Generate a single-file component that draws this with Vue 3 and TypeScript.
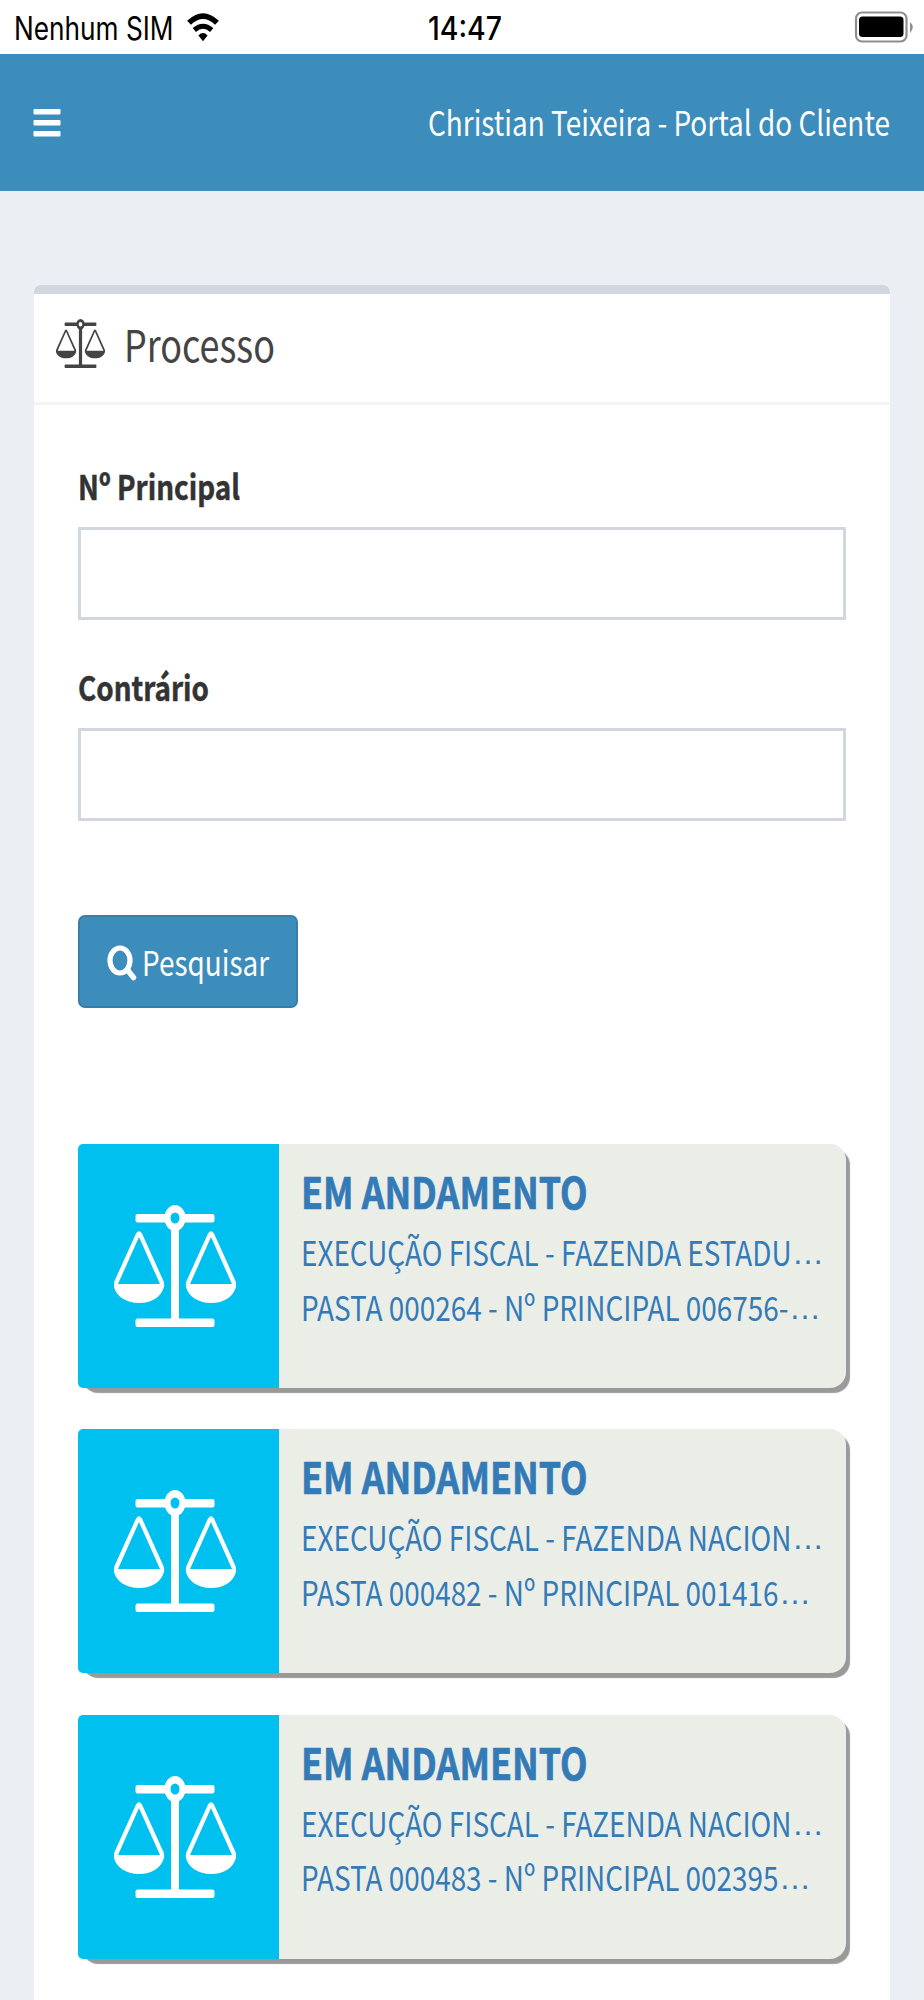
<script setup lang="ts">
import type { Directive } from 'vue'

interface Line { text: string; width: number; dots: number }
interface Process { status: string; lines: Line[] }

const processes: Process[] = [
  { status: 'EM ANDAMENTO', lines: [
    { text: 'EXECUÇÃO FISCAL - FAZENDA ESTADU', width: 490.5, dots: 32 },
    { text: 'PASTA 000264 - Nº PRINCIPAL 006756-', width: 487.5, dots: 32 },
  ] },
  { status: 'EM ANDAMENTO', lines: [
    { text: 'EXECUÇÃO FISCAL - FAZENDA NACION', width: 490.5, dots: 32 },
    { text: 'PASTA 000482 - Nº PRINCIPAL 001416', width: 477.5, dots: 32 },
  ] },
  { status: 'EM ANDAMENTO', lines: [
    { text: 'EXECUÇÃO FISCAL - FAZENDA NACION', width: 490.5, dots: 32 },
    { text: 'PASTA 000483 - Nº PRINCIPAL 002395', width: 477.5, dots: 32 },
  ] },
]

// Condenses a line of text horizontally to the given width.
const vFit: Directive<HTMLElement, number> = {
  mounted(el, { value }) {
    const natural = el.getBoundingClientRect().width
    el.style.transform = `scaleX(${value / natural})`
    el.style.marginRight = `${value - natural}px`
  },
}
</script>

<template>
  <div class="screen">
    <div class="status">
      <div class="carrier">
        <span v-fit="159.5" class="fit">Nenhum SIM</span>
        <svg class="wifi" width="34" height="30" viewBox="0 0 34 30">
          <path d="M3 9.800Q17 -3.500 31 9.800" fill="none" stroke="#000" stroke-width="5.500" />
          <path d="M8.300 17Q17 9.500 25.700 17" fill="none" stroke="#000" stroke-width="5" />
          <path d="M12.400 22.500Q17 17.600 21.600 22.500L17 28.300Z" />
        </svg>
      </div>
      <div class="clock"><span v-fit="74" class="fit">14:47</span></div>
      <svg class="battery" width="60" height="34" viewBox="0 0 60 34">
        <rect x="2" y="2.500" width="50.500" height="29" rx="6" fill="none" stroke="#8e8e8e" stroke-width="2.200" />
        <rect x="5" y="6.500" width="44.500" height="20.500" rx="3.500" />
        <path d="M56 12Q61.500 17 56 23Z" fill="#8e8e8e" />
      </svg>
    </div>

    <header class="navbar">
      <svg width="28" height="28" viewBox="0 0 28 28" fill="#fff">
        <rect x="0.500" y="0" width="27" height="5.500" rx="1" />
        <rect x="0.500" y="11" width="27" height="5.500" rx="1" />
        <rect x="0.500" y="22" width="27" height="5.500" rx="1" />
      </svg>
      <span v-fit="462" class="fit">Christian Teixeira - Portal do Cliente</span>
    </header>

    <main class="box">
      <div class="box-header">
        <svg class="scale-small" viewBox="0 0 122 122">
          <use href="#scale" />
        </svg>
        <span v-fit="151" class="fit">Processo</span>
      </div>

      <div class="box-body">
        <label class="field">
          <span v-fit="162" class="fit">Nº Principal</span>
          <input type="text">
        </label>
        <label class="field">
          <span v-fit="131" class="fit">Contrário</span>
          <input type="text">
        </label>

        <button class="search" type="button">
          <svg width="30" height="36" viewBox="0 0 30 36" fill="none" stroke="#fff">
            <ellipse cx="13" cy="15.500" rx="10" ry="12.500" stroke-width="5.200" />
            <path d="M20.500 25L26.500 32.500" stroke-width="5.500" stroke-linecap="round" />
          </svg>
          <span v-fit="127" class="fit">Pesquisar</span>
        </button>

        <a v-for="(item, i) in processes" :key="i" class="card">
          <span class="card-icon">
            <svg width="122" height="122" viewBox="0 0 122 122">
              <g :id="i === 0 ? 'scale' : undefined">
                <rect x="21.500" y="9" width="32" height="8.500" rx="2" fill="currentColor" />
                <rect x="68.500" y="9" width="32" height="8.500" rx="2" fill="currentColor" />
                <rect x="57" y="22" width="8" height="96" fill="currentColor" />
                <rect x="21.500" y="113.500" width="79" height="8.500" rx="2" fill="currentColor" />
                <path fill-rule="evenodd" fill="currentColor" d="M61 0a10.500 13 0 0 1 0 26a10.500 13 0 0 1 0-26ZM61 7.500a4.500 5.500 0 0 0 0 11a4.500 5.500 0 0 0 0-11Z" />
                <path v-for="x in [0, 72]" :key="x" :transform="`translate(${x} 0)`" fill-rule="evenodd" fill="currentColor" d="M22 28.500Q25 24 28 28.500L49.500 76Q50.500 79 50 82C47 92 38 98 25 98S2 91 0 82Q-.5 79 .5 76ZM25 32L4 79H46Z" />
              </g>
            </svg>
          </span>
          <span class="card-text">
            <span class="row title"><span v-fit="286.5" class="fit">{{ item.status }}</span></span>
            <span v-for="line in item.lines" :key="line.text" class="row">
              <span v-fit="line.width" class="fit">{{ line.text }}</span><span v-fit="line.dots" class="fit dots">…</span>
            </span>
          </span>
        </a>
      </div>
    </main>
  </div>
</template>

<style>
body { background: #ebeff4; }
</style>

<style scoped>
.screen {
  width: 924px;
  height: 2000px;
  overflow: hidden;
  background: #ebeff4;
  font-family: "Noto Sans CJK SC", "Open Sans", sans-serif;
  font-size: 34px;
}
.fit { display: inline-block; flex: none; white-space: pre; transform-origin: 0 50%; }
.status {
  display: grid;
  grid-template-columns: 1fr 69px 1fr;
  height: 54px;
  background: #fff;
  color: #000;
  font-family: Inter, sans-serif;
  font-size: 32px;
  line-height: 58px;
}
.carrier { display: flex; padding-left: 14px; }
.wifi { margin: 13px 0 0 12.5px; }
.clock { font-weight: 500; }
.battery { justify-self: end; margin: 10px 10px 0 0; }
.navbar {
  display: flex;
  align-items: center;
  justify-content: space-between;
  box-sizing: border-box;
  height: 136.5px;
  padding: 0 34px 0 33px;
  background: #3c8dbc;
  color: #fff;
}
.navbar svg { margin-top: 1px; }
.navbar .fit { margin-top: -2px; }
.box {
  box-sizing: border-box;
  height: 1800px;
  margin: 94.5px 34px 0;
  border-top: 9px solid #d2d6de;
  border-radius: 7px 7px 0 0;
  background: #fff;
}
.box-header {
  display: flex;
  align-items: center;
  height: 108px;
  padding-left: 22px;
  border-bottom: 3px solid #f4f4f4;
  color: #444;
  font-size: 43.5px;
}
.box-header .fit { margin-top: -10px; }
.scale-small { width: 49px; height: 49px; margin: -9px 19px 0 0; }
.box-body { display: flex; flex-direction: column; padding: 56px 44px 0; }
.field { height: 201px; color: #333; font-weight: 700; }
.field .fit { display: block; width: max-content; height: 51px; line-height: 50px; -webkit-text-stroke: 0.5px; }
.field input {
  display: block;
  box-sizing: border-box;
  width: 768px;
  height: 93px;
  margin-top: 15px;
  padding: 0 20px;
  border: 3px solid #d2d6de;
  border-radius: 0;
  background: #fff;
  font: inherit;
}
.search {
  display: flex;
  align-items: center;
  box-sizing: border-box;
  width: 220px;
  height: 93px;
  margin: 52px 0 136px;
  padding: 0 0 0 27px;
  border: 2px solid #367fa9;
  border-radius: 7px;
  background: #3c8dbc;
  color: #fff;
  font: inherit;
}
.search svg { margin: 2px 5px 0 0; }
.search .fit { margin-top: -1px; }
.card {
  display: flex;
  flex: none;
  height: 244px;
  margin-bottom: 41.3px;
  border-radius: 16px;
  background: #ebeee7;
  box-shadow: 4px 5px 1px #999;
  color: #337ab7;
}
.card-icon {
  display: flex;
  flex: none;
  width: 201px;
  border-radius: 5px 0 0 5px;
  background: #00c0ef;
  color: #fff;
}
.card-icon svg { margin: 61px 0 0 36px; }
.card-text { display: block; padding: 19px 0 0 22px; }
.row { display: flex; height: 54.500px; line-height: 54.500px; white-space: nowrap; }
.title { height: 62px; line-height: 55px; font-size: 43.5px; font-weight: 700; -webkit-text-stroke: 0.7px; }
.dots { font-family: "Liberation Sans", sans-serif; }
</style>
